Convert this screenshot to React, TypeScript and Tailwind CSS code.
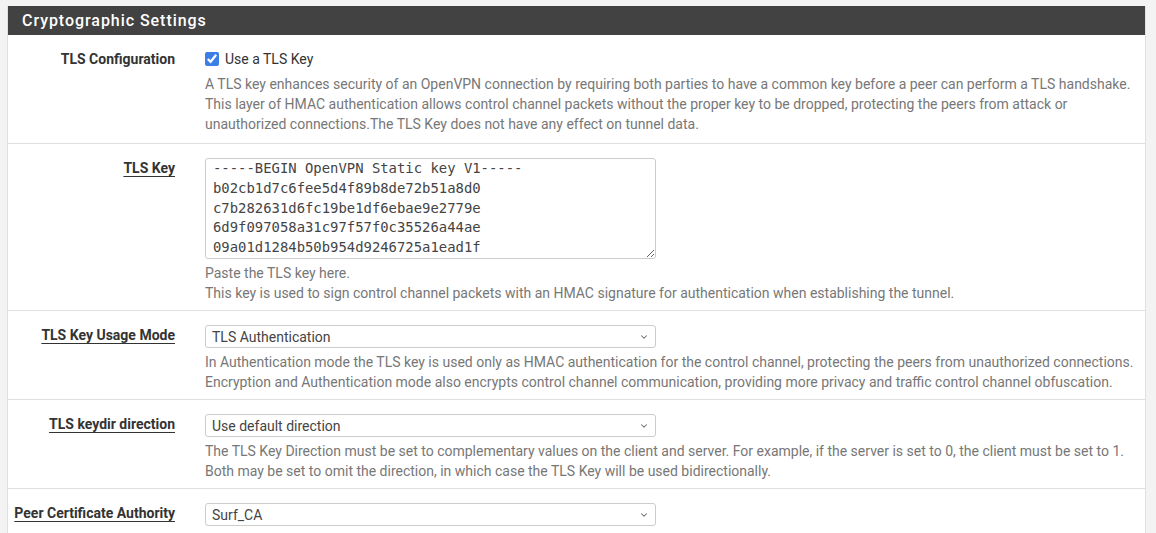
import { ChevronDown } from "lucide-react";

const keyText = [
  "-----BEGIN OpenVPN Static key V1-----",
  "b02cb1d7c6fee5d4f89b8de72b51a8d0",
  "c7b282631d6fc19be1df6ebae9e2779e",
  "6d9f097058a31c97f57f0c35526a44ae",
  "09a01d1284b50b954d9246725a1ead1f",
  "4f1c0d8a3e7b29c56d0a1b2c3d4e5f60",
  "-----END OpenVPN Static key V1-----",
].join("\n");

function Label({ text, link = true }: { text: string; link?: boolean }) {
  return (
    <div className="w-[167px] shrink-0 text-right text-[14px] font-bold leading-[20px] text-[#333]">
      <span className={link ? "underline decoration-1 underline-offset-[3px]" : ""}>{text}</span>
    </div>
  );
}

function Help({ lines }: { lines: string[] }) {
  return (
    <div className="mt-[4px] text-[14px] leading-[20px] text-[#777]">
      {lines.map((l) => (
        <div key={l} className="whitespace-nowrap">
          {l}
        </div>
      ))}
    </div>
  );
}

function Select({ value }: { value: string }) {
  return (
    <div className="relative w-[451px]">
      <select
        defaultValue={value}
        className="block h-[23px] w-full appearance-none rounded-[3px] border border-[#ccc] bg-white pl-[6px] text-[14px] leading-[20px] text-[#444]"
      >
        <option>{value}</option>
      </select>
      <ChevronDown
        size={10}
        strokeWidth={2.5}
        className="pointer-events-none absolute right-[7px] top-[7px] text-[#666]"
      />
    </div>
  );
}

export default function App() {
  return (
    <main
      className="min-h-screen bg-[#f3f3f3] pl-[7px] pr-[10px] pt-[6px]"
      style={{ fontFamily: "Roboto, 'Liberation Sans', sans-serif" }}
    >
      <section className="border-x border-[#e0e0e0] bg-white">
        <div className="h-[29px] bg-[#424242] pl-[14px] text-[16px] font-medium leading-[30px] tracking-[0.95px] text-white">
          Cryptographic Settings
        </div>

        <div className="flex gap-[30px] border-b border-[#e0e0e0] pb-[9px] pt-[14px]">
          <Label text="TLS Configuration" link={false} />
          <div className="flex-1">
            <label className="flex items-center gap-[6px] text-[14px] leading-[20px] text-[#333]">
              <input type="checkbox" defaultChecked className="m-0 h-[14px] w-[14px] accent-[#3a7ee6]" />
              Use a TLS Key
            </label>
            <div className="mt-[5px] text-[14px] leading-[20px] text-[#777]">
              <div className="whitespace-nowrap">
                A TLS key enhances security of an OpenVPN connection by requiring both parties to have a common key before a peer can perform a TLS handshake.
              </div>
              <div className="whitespace-nowrap">
                This layer of HMAC authentication allows control channel packets without the proper key to be dropped, protecting the peers from attack or
              </div>
              <div className="whitespace-nowrap">unauthorized connections.The TLS Key does not have any effect on tunnel data.</div>
            </div>
          </div>
        </div>

        <div className="flex gap-[30px] border-b border-[#e0e0e0] pb-[7px] pt-[14px]">
          <Label text="TLS Key" />
          <div className="flex-1">
            <textarea
              defaultValue={keyText}
              spellCheck={false}
              className="block h-[101px] w-[451px] resize-y overflow-hidden rounded-[3px] border border-[#ccc] bg-white px-[7px] pt-0 text-[13.9px] leading-[19.8px] text-[#444]"
              style={{ fontFamily: "'DejaVu Sans Mono', monospace" }}
            />
            <Help
              lines={[
                "Paste the TLS key here.",
                "This key is used to sign control channel packets with an HMAC signature for authentication when establishing the tunnel.",
              ]}
            />
          </div>
        </div>

        <div className="flex gap-[30px] border-b border-[#e0e0e0] pb-[7px] pt-[14px]">
          <Label text="TLS Key Usage Mode" />
          <div className="flex-1">
            <Select value="TLS Authentication" />
            <Help
              lines={[
                "In Authentication mode the TLS key is used only as HMAC authentication for the control channel, protecting the peers from unauthorized connections.",
                "Encryption and Authentication mode also encrypts control channel communication, providing more privacy and traffic control channel obfuscation.",
              ]}
            />
          </div>
        </div>

        <div className="flex gap-[30px] border-b border-[#e0e0e0] pb-[7px] pt-[14px]">
          <Label text="TLS keydir direction" />
          <div className="flex-1">
            <Select value="Use default direction" />
            <Help
              lines={[
                "The TLS Key Direction must be set to complementary values on the client and server. For example, if the server is set to 0, the client must be set to 1.",
                "Both may be set to omit the direction, in which case the TLS Key will be used bidirectionally.",
              ]}
            />
          </div>
        </div>

        <div className="flex gap-[30px] pb-[20px] pt-[14px]">
          <Label text="Peer Certificate Authority" />
          <div className="flex-1">
            <Select value="Surf_CA" />
          </div>
        </div>
      </section>
    </main>
  );
}
